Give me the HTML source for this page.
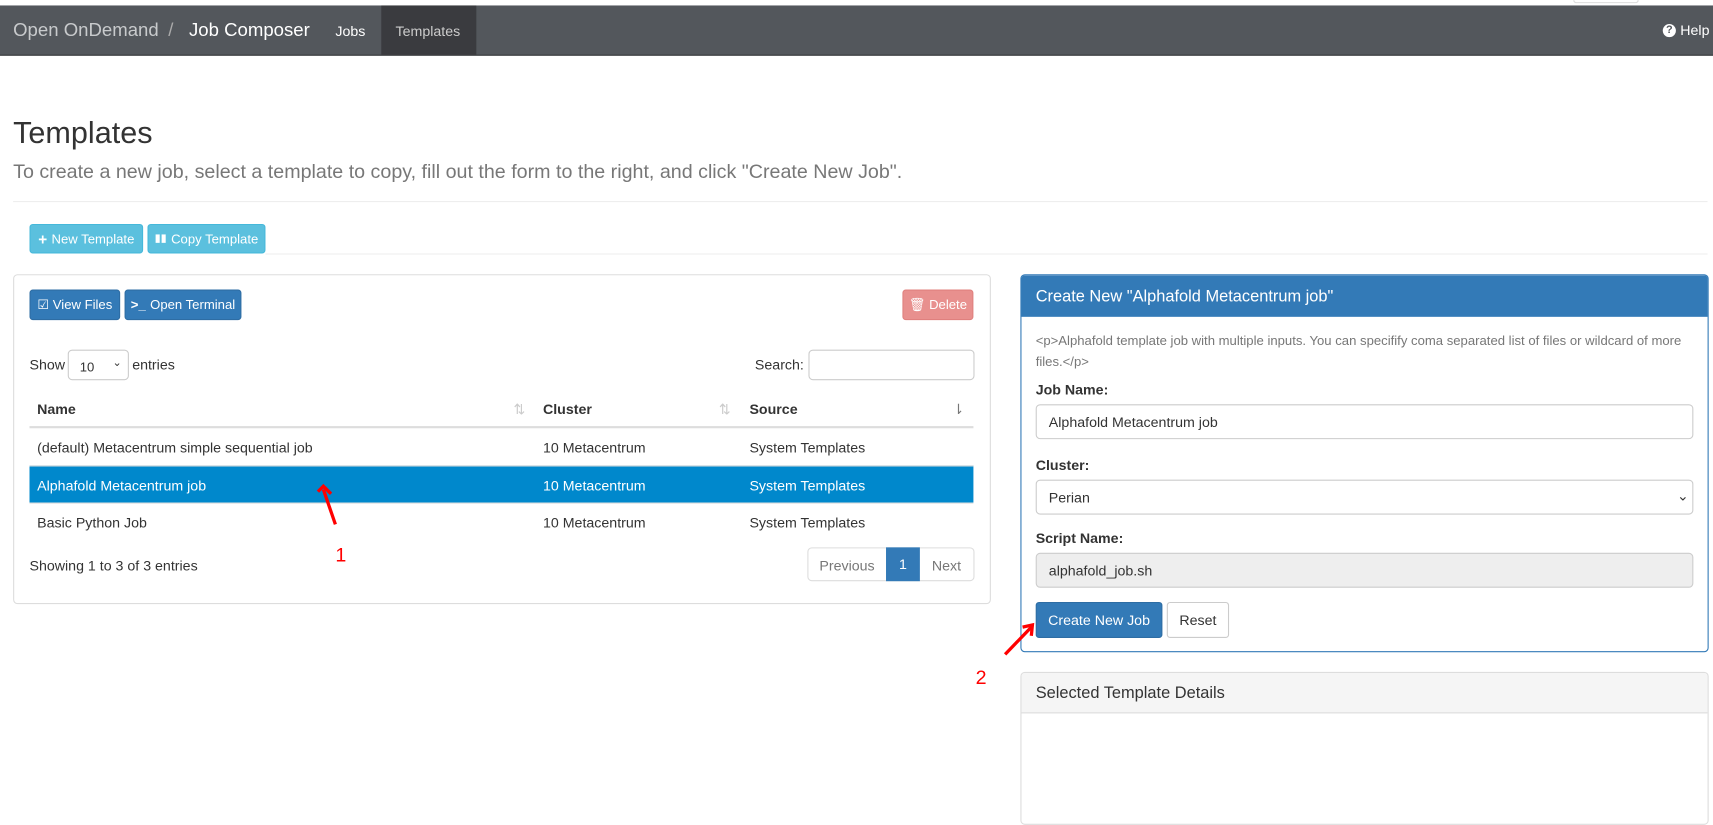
<!DOCTYPE html>
<html><head><meta charset="utf-8"><style>
*{box-sizing:border-box;margin:0;padding:0}
html,body{width:1713px;height:741px;overflow:hidden;background:#fff}
#w{position:absolute;left:0;top:0;width:1568px;height:679px;transform:scale(1.0925);transform-origin:0 0;font-family:"Liberation Sans",Arial,sans-serif;font-size:13px;color:#333}
.a{position:absolute}
.nav{top:5px;left:0;width:1568px;height:46px;background:#53575c;border-bottom:1px solid #3a3b3e}
.btn{position:absolute;border-radius:3px;color:#fff;font-size:12px;display:flex;align-items:center;justify-content:center;gap:4px}
.info{background:#5bc0de;border:1px solid #46b8da}
.prim{background:#337ab7;border:1px solid #2e6da4}
.inp{position:absolute;border:1px solid #ccc;border-radius:4px;background:#fff}
.lbl{position:absolute;font-weight:bold;font-size:13px;color:#333}
.row{position:absolute;left:27px;width:864px;height:34px;border-top:1px solid #ddd}
.row span{position:absolute;top:10px}
</style></head><body><div id="w">
<div class="a nav">
 <div class="a" style="left:12px;top:13px;font-size:17px;color:#c8cacc">Open OnDemand</div>
 <div class="a" style="left:154px;top:13px;font-size:17px;color:#aaa">/</div>
 <div class="a" style="left:173px;top:13px;font-size:17px;color:#fff">Job Composer</div>
 <div class="a" style="left:307px;top:16px;font-size:13px;color:#fff">Jobs</div>
 <div class="a" style="left:349px;top:0;width:87px;height:45px;background:#3a3b3f"></div>
 <div class="a" style="left:362px;top:16px;font-size:13px;color:#ccc">Templates</div>
 <div class="a" style="left:1522px;top:17px;width:12px;height:12px;border-radius:50%;background:#fff;color:#53575c;font-size:10px;font-weight:bold;text-align:center;line-height:12px">?</div>
 <div class="a" style="left:1538px;top:15px;font-size:13px;color:#fff">Help</div>
</div>
<div class="a" style="left:1440px;top:0;width:60px;height:3px;border:1px solid #ddd;border-top:none;border-radius:0 0 4px 4px"></div>

<div class="a" style="left:12px;top:106px;font-size:28px;color:#333">Templates</div>
<div class="a" style="left:12px;top:147px;font-size:18px;color:#777">To create a new job, select a template to copy, fill out the form to the right, and click "Create New Job".</div>
<div class="a" style="left:12px;top:184px;width:1551px;height:1px;background:#eee"></div>

<div class="btn info" style="left:27px;top:205px;width:104px;height:27px"><b style="font-size:14px">+</b>New Template</div>
<div class="btn info" style="left:135px;top:205px;width:108px;height:27px"><span style="font-size:10px">▮▮</span>Copy Template</div>
<div class="a" style="left:243px;top:232px;width:1320px;height:1px;background:#eee"></div>

<div class="a" style="left:12px;top:251px;width:895px;height:302px;border:1px solid #ddd;border-radius:4px"></div>
<div class="btn prim" style="left:27px;top:265px;width:83px;height:28px">☑ View Files</div>
<div class="btn prim" style="left:114px;top:265px;width:107px;height:28px"><b>&gt;_</b> Open Terminal</div>
<div class="btn" style="left:826px;top:265px;width:65px;height:28px;background:#e8908e;border:1px solid #e0807e">🗑 Delete</div>

<div class="a" style="left:27px;top:326px">Show</div>
<div class="inp" style="left:62px;top:320px;width:56px;height:28px"><span class="a" style="left:10px;top:8px;font-size:12px">10</span><span class="a" style="left:40px;top:6px;font-size:10px">⌄</span></div>
<div class="a" style="left:121px;top:326px">entries</div>
<div class="a" style="left:691px;top:326px">Search:</div>
<div class="inp" style="left:740px;top:320px;width:152px;height:28px"></div>

<div class="a" style="left:27px;top:358px;width:864px;height:34px;border-bottom:2px solid #ddd">
 <b class="a" style="left:7px;top:9px">Name</b><span class="a" style="left:443px;top:9px;color:#ccc">⇅</span>
 <b class="a" style="left:470px;top:9px">Cluster</b><span class="a" style="left:631px;top:9px;color:#ccc">⇅</span>
 <b class="a" style="left:659px;top:9px">Source</b><span class="a" style="left:845px;top:9px;color:#777">⇂</span>
</div>
<div class="row" style="top:392px;border-top:none"><span style="left:7px">(default) Metacentrum simple sequential job</span><span style="left:470px">10 Metacentrum</span><span style="left:659px">System Templates</span></div>
<div class="row" style="top:426px;background:#0088cc;color:#fff"><span style="left:7px">Alphafold Metacentrum job</span><span style="left:470px">10 Metacentrum</span><span style="left:659px">System Templates</span></div>
<div class="row" style="top:460px"><span style="left:7px">Basic Python Job</span><span style="left:470px">10 Metacentrum</span><span style="left:659px">System Templates</span></div>

<div class="a" style="left:27px;top:510px">Showing 1 to 3 of 3 entries</div>
<div class="a" style="left:739px;top:501px;width:153px;height:31px;border:1px solid #ddd;border-radius:4px"></div>
<div class="a" style="left:750px;top:510px;color:#777">Previous</div>
<div class="a" style="left:811px;top:501px;width:31px;height:31px;background:#337ab7;color:#fff;text-align:center;line-height:31px">1</div>
<div class="a" style="left:853px;top:510px;color:#777">Next</div>

<div class="a" style="left:934px;top:251px;width:630px;height:346px;border:1px solid #337ab7;border-radius:4px;overflow:hidden">
 <div style="height:38px;background:#337ab7;color:#fff;font-size:15px;padding:11px 13px">Create New "Alphafold Metacentrum job"</div>
</div>
<div class="a" style="left:948px;top:303px;color:#777;font-size:12px;line-height:19px;width:605px">&lt;p&gt;Alphafold template job with multiple inputs. You can specifify coma separated list of files or wildcard of more files.&lt;/p&gt;</div>
<div class="lbl" style="left:948px;top:349px">Job Name:</div>
<div class="inp" style="left:948px;top:370px;width:602px;height:32px"><span class="a" style="left:11px;top:8px">Alphafold Metacentrum job</span></div>
<div class="lbl" style="left:948px;top:418px">Cluster:</div>
<div class="inp" style="left:948px;top:439px;width:602px;height:32px"><span class="a" style="left:11px;top:8px">Perian</span><span class="a" style="left:586px;top:6px">⌄</span></div>
<div class="lbl" style="left:948px;top:485px">Script Name:</div>
<div class="inp" style="left:948px;top:506px;width:602px;height:32px;background:#eee"><span class="a" style="left:11px;top:8px">alphafold_job.sh</span></div>
<div class="btn prim" style="left:948px;top:551px;width:116px;height:33px;font-size:13px">Create New Job</div>
<div class="btn" style="left:1068px;top:551px;width:57px;height:33px;font-size:13px;color:#333;border:1px solid #ccc">Reset</div>

<div class="a" style="left:934px;top:615px;width:630px;height:140px;border:1px solid #ddd;border-radius:4px;overflow:hidden">
 <div style="height:37px;background:#f5f5f5;border-bottom:1px solid #ddd;font-size:15px;padding:10px 13px">Selected Template Details</div>
</div>

<svg class="a" style="left:0;top:0" width="1568" height="679">
 <path d="M307 480 L296 448" stroke="#f00" stroke-width="3" fill="none"/>
 <path d="M291 450 L296 445 L303 452" stroke="#f00" stroke-width="3" fill="none"/>
 <path d="M920 599 L945 573" stroke="#f00" stroke-width="3" fill="none"/>
 <path d="M936 574 L945 572 L944 582" stroke="#f00" stroke-width="3" fill="none"/>
 <text x="307" y="514" fill="#f00" font-size="18" font-family="Liberation Sans">1</text>
 <text x="893" y="626" fill="#f00" font-size="18" font-family="Liberation Sans">2</text>
</svg>
</div></body></html>
